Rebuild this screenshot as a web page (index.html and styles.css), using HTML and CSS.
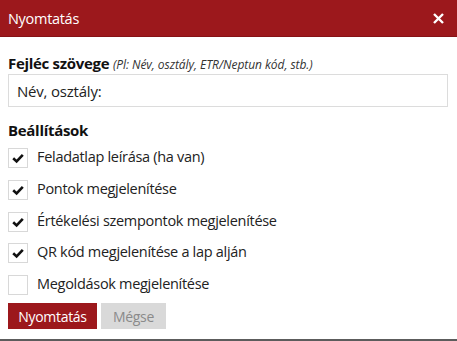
FILE: index.html
```html
<!DOCTYPE html>
<html lang="hu">
<head>
<meta charset="utf-8">
<title>Nyomtatás</title>
<link rel="stylesheet" href="styles.css">
</head>
<body>
<div class="dialog">
  <div class="header">
    <span class="title">Nyomtatás</span>
    <svg class="close" viewBox="0 0 11 11" width="11" height="11"><path d="M1 1 L10 10 M10 1 L1 10" stroke="#fff" stroke-width="2.4" fill="none"/></svg>
  </div>
  <div class="content">
    <div class="label"><b>Fejléc szövege</b> <i class="hint">(Pl: Név, osztály, ETR/Neptun kód, stb.)</i></div>
    <div class="input">Név, osztály:</div>
    <div class="section">Beállítások</div>
    <div class="options">
      <div class="opt"><span class="cb"><svg viewBox="0 0 20 20" width="20" height="20"><path d="M5.2 10.2 L8.6 13.4 L14.8 6.8" fill="none" stroke="#111" stroke-width="2.6"/></svg></span><span>Feladatlap leírása (ha van)</span></div>
      <div class="opt"><span class="cb"><svg viewBox="0 0 20 20" width="20" height="20"><path d="M5.2 10.2 L8.6 13.4 L14.8 6.8" fill="none" stroke="#111" stroke-width="2.6"/></svg></span><span>Pontok megjelenítése</span></div>
      <div class="opt"><span class="cb"><svg viewBox="0 0 20 20" width="20" height="20"><path d="M5.2 10.2 L8.6 13.4 L14.8 6.8" fill="none" stroke="#111" stroke-width="2.6"/></svg></span><span>Értékelési szempontok megjelenítése</span></div>
      <div class="opt"><span class="cb"><svg viewBox="0 0 20 20" width="20" height="20"><path d="M5.2 10.2 L8.6 13.4 L14.8 6.8" fill="none" stroke="#111" stroke-width="2.6"/></svg></span><span>QR kód megjelenítése a lap alján</span></div>
      <div class="opt"><span class="cb"></span><span>Megoldások megjelenítése</span></div>
    </div>
    <div class="buttons">
      <span class="btn primary">Nyomtatás</span>
      <span class="btn secondary">Mégse</span>
    </div>
  </div>
</div>
</body>
</html>
```
FILE: styles.css
```css
html, body {
  margin: 0;
  padding: 0;
  background: #fff;
}
body {
  font-family: "Open Sans", "Noto Sans", sans-serif;
  color: #222;
}
.dialog {
  width: 457px;
  height: 341px;
  box-sizing: border-box;
  border-bottom: 2px solid #5c5c5c;
  display: flex;
  flex-direction: column;
}
.header {
  height: 37px;
  box-sizing: border-box;
  background: #9c181c;
  border-bottom: 1px solid #861216;
  display: flex;
  align-items: center;
  justify-content: space-between;
  padding: 0 13px 0 8px;
}
.title {
  color: #fff;
  font-size: 14.5px;
  letter-spacing: -0.3px;
}
.close {
  display: block;
  flex: none;
}
.content {
  padding: 16px 9px 0 8px;
  display: flex;
  flex-direction: column;
}
.label {
  font-size: 15px;
  line-height: 20px;
  height: 20px;
  color: #111;
  letter-spacing: -0.3px;
  white-space: nowrap;
}
.label b {
  font-weight: 700;
}
.hint {
  font-size: 12px;
  color: #333;
  letter-spacing: -0.05px;
}
.input {
  margin-top: 1px;
  height: 33px;
  box-sizing: border-box;
  border: 1px solid #dcdcdc;
  padding: 0 8px;
  display: flex;
  align-items: center;
  font-size: 15px;
  color: #222;
  letter-spacing: -0.2px;
}
.section {
  margin-top: 13px;
  font-size: 15px;
  font-weight: 700;
  line-height: 20px;
  color: #111;
  letter-spacing: -0.3px;
}
.options {
  margin-top: 8px;
  display: flex;
  flex-direction: column;
  gap: 11.75px;
}
.opt {
  display: flex;
  align-items: center;
  gap: 9px;
  height: 20px;
  font-size: 14.5px;
  line-height: 18px;
  color: #222;
  letter-spacing: -0.3px;
}
.opt > span:last-child {
  position: relative;
  top: -1px;
}
.cb {
  width: 20px;
  height: 20px;
  box-sizing: border-box;
  border: 1px solid #d8d8d8;
  display: flex;
  align-items: center;
  justify-content: center;
  flex: none;
}
.cb svg {
  display: block;
  flex: none;
}
.buttons {
  margin-top: 8px;
  display: flex;
  gap: 4px;
}
.btn {
  height: 26px;
  display: flex;
  align-items: center;
  justify-content: center;
  font-size: 14px;
  letter-spacing: -0.3px;
}
.primary {
  width: 89px;
  background: #9c181c;
  color: #fff;
}
.secondary {
  width: 65px;
  background: #d9d9d9;
  color: #8a8a8a;
}
```
